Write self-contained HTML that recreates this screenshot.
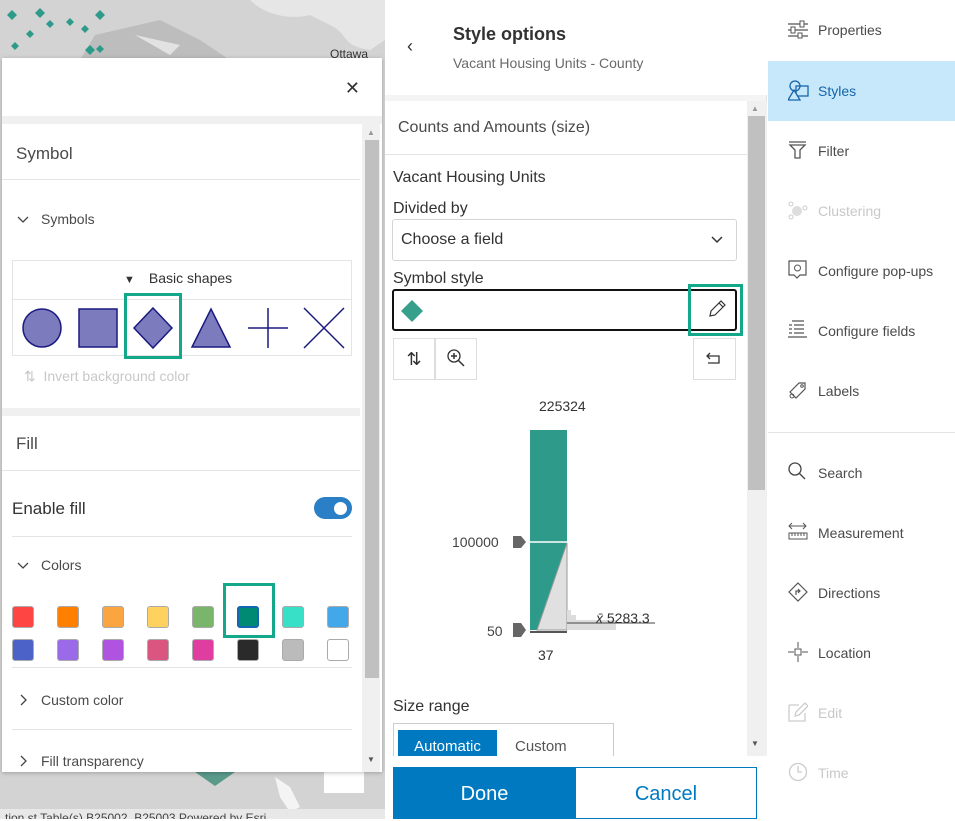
<!DOCTYPE html>
<html><head><style>
*{margin:0;padding:0;box-sizing:border-box}
body{width:955px;height:819px;position:relative;overflow:hidden;font-family:"Liberation Sans",sans-serif;color:#323232;background:#fff}
.a{position:absolute}
.t{font-size:15px}
.nav .it{position:absolute;left:0;width:187px;height:60px;font-size:14px;color:#4a4a4a}
.nav .it span{position:absolute;left:50px;top:22px}
.nav .it svg{position:absolute;left:20px;top:19px}
.sw{position:absolute;width:22px;height:22px;border-radius:3px;border:1px solid #aaa}
</style></head><body>
<!-- map -->
<div class="a" style="left:0;top:0;width:385px;height:819px;background:#d3d3d3"></div>
<svg class="a" style="left:0;top:0" width="385" height="60">
<path d="M250 0 C265 15 290 20 310 15 L330 25 C350 35 340 45 370 50 L385 40 L385 0Z" fill="#e6e6e6"/>
<path d="M95 35 L160 20 L200 40 L230 60 L80 60Z" fill="#bdbdbd"/>
<path d="M135 35 L180 45 L170 55 Z" fill="#e2e2e2"/>
<g fill="#2e9b8a"><path d="M12 10l5 5-5 5-5-5z"/><path d="M40 8l5 5-5 5-5-5z"/><path d="M70 18l4 4-4 4-4-4z"/><path d="M100 10l5 5-5 5-5-5z"/><path d="M50 20l4 4-4 4-4-4z"/><path d="M30 30l4 4-4 4-4-4z"/><path d="M90 45l5 5-5 5-5-5z"/><path d="M100 45l4 4-4 4-4-4z"/><path d="M85 25l4 4-4 4-4-4z"/><path d="M15 42l4 4-4 4-4-4z"/></g>
<text x="330" y="58" font-size="12" fill="#333">Ottawa</text>
</svg>
<svg class="a" style="left:0;top:772" width="385" height="47">
<path d="M195 0 L215 14 L235 0Z" fill="#5a9a8a"/>
<path d="M275 5 L290 15 L300 35 L290 40 L280 25Z" fill="#f4f4f4"/>
<rect x="324" y="0" width="40" height="21" fill="#fff"/>
<rect x="0" y="37" width="385" height="10" fill="#e8e8e8"/>
<text x="5" y="50" font-size="12" fill="#444">tion.st  Table(s) B25002, B25003    Powered by Esri</text>
</svg>
<!-- popup -->
<div class="a" style="left:2px;top:58px;width:380px;height:714px;background:#fff;box-shadow:0 1px 4px rgba(0,0,0,.25)">
<div class="a" style="right:22px;top:20px;font-size:18px;color:#333">✕</div>
<div class="a" style="left:0;top:58px;width:380px;height:8px;background:#f0f0f0"></div>
<div class="a" style="left:360px;top:66px;width:18px;height:648px;background:#f0f0f0"></div>
<div class="a" style="left:363px;top:82px;width:14px;height:538px;background:#c0c0c0"></div>
<div class="a" style="left:365px;top:70px;font-size:8px;color:#999">▲</div>
<div class="a" style="left:365px;top:697px;font-size:8px;color:#555">▼</div>
<div class="a t" style="left:14px;top:86px;font-size:17px;color:#4a4a4a">Symbol</div>
<div class="a" style="left:0;top:121px;width:358px;height:1px;background:#e4e4e4"></div>
<svg class="a" style="left:15px;top:158px" width="12" height="8"><path d="M1 1l5 5 5-5" fill="none" stroke="#444" stroke-width="1.3"/></svg>
<div class="a t" style="left:39px;top:153px;font-size:14px;color:#4a4a4a">Symbols</div>
<div class="a" style="left:10px;top:202px;width:340px;height:96px;border:1px solid #e4e4e4"></div>
<div class="a" style="left:10px;top:241px;width:340px;height:1px;background:#e4e4e4"></div>
<div class="a" style="left:122px;top:212px;font-size:14px;color:#323232"><span style="font-size:11px;margin-right:14px">▼</span>Basic shapes</div>
<svg class="a" style="left:10px;top:242px" width="340" height="56">
<g fill="#7b7bbd" stroke="#1a1a80" stroke-width="1.5">
<circle cx="30" cy="28" r="19"/><rect x="67" y="9" width="38" height="38"/><path d="M141 8l19 20-19 20-19-20z"/><path d="M199 9l19 38h-38z"/></g>
<g stroke="#1a1a80" stroke-width="1.5"><path d="M236 28h40M256 8v40M292 8l40 40M332 8l-40 40"/></g>
</svg>
<div class="a" style="left:122px;top:235px;width:58px;height:66px;border:3px solid #14a88a"></div>
<div class="a" style="left:22px;top:310px;font-size:14px;color:#c8c8c8">⇅&nbsp; Invert background color</div>
<div class="a" style="left:0;top:350px;width:358px;height:8px;background:#f0f0f0"></div>
<div class="a" style="left:14px;top:376px;font-size:17px;color:#4a4a4a">Fill</div>
<div class="a" style="left:0;top:412px;width:358px;height:1px;background:#e4e4e4"></div>
<div class="a" style="left:10px;top:441px;font-size:17px;color:#323232">Enable fill</div>
<div class="a" style="left:312px;top:439px;width:38px;height:22px;border-radius:11px;background:#2a7fc7"></div>
<div class="a" style="left:330px;top:442px;width:17px;height:17px;border-radius:50%;background:#fff;border:2px solid #2a7fc7"></div>
<div class="a" style="left:10px;top:478px;width:340px;height:1px;background:#e4e4e4"></div>
<svg class="a" style="left:15px;top:504px" width="12" height="8"><path d="M1 1l5 5 5-5" fill="none" stroke="#444" stroke-width="1.3"/></svg>
<div class="a" style="left:39px;top:499px;font-size:14px;color:#4a4a4a">Colors</div>
<div class="sw" style="left:10px;top:548px;background:#f44"></div>
<div class="sw" style="left:55px;top:548px;background:#ff7f00"></div>
<div class="sw" style="left:100px;top:548px;background:#faa540"></div>
<div class="sw" style="left:145px;top:548px;background:#ffd15e"></div>
<div class="sw" style="left:190px;top:548px;background:#79b56a"></div>
<div class="sw" style="left:235px;top:548px;background:#008a74;border:2px solid #1566b0"></div>
<div class="sw" style="left:280px;top:548px;background:#38e0c8"></div>
<div class="sw" style="left:325px;top:548px;background:#43a8ea"></div>
<div class="sw" style="left:10px;top:581px;background:#4c62c8"></div>
<div class="sw" style="left:55px;top:581px;background:#9b6ae8"></div>
<div class="sw" style="left:100px;top:581px;background:#b053e0"></div>
<div class="sw" style="left:145px;top:581px;background:#da5580"></div>
<div class="sw" style="left:190px;top:581px;background:#e03da0"></div>
<div class="sw" style="left:235px;top:581px;background:#2a2a2a"></div>
<div class="sw" style="left:280px;top:581px;background:#bbb"></div>
<div class="sw" style="left:325px;top:581px;background:#fff"></div>
<div class="a" style="left:221px;top:525px;width:52px;height:55px;border:3px solid #14a88a"></div>
<div class="a" style="left:10px;top:609px;width:340px;height:1px;background:#e4e4e4"></div>
<svg class="a" style="left:18px;top:636px" width="8" height="12"><path d="M1 1l5 5-5 5" fill="none" stroke="#444" stroke-width="1.3"/></svg>
<div class="a" style="left:39px;top:634px;font-size:14px;color:#4a4a4a">Custom color</div>
<div class="a" style="left:10px;top:671px;width:340px;height:1px;background:#e4e4e4"></div>
<svg class="a" style="left:18px;top:697px" width="8" height="12"><path d="M1 1l5 5-5 5" fill="none" stroke="#444" stroke-width="1.3"/></svg>
<div class="a" style="left:39px;top:695px;font-size:14px;color:#4a4a4a">Fill transparency</div>
</div>
<!-- middle panel -->
<div class="a" style="left:385px;top:0;width:382px;height:819px;background:#f4f4f4;border-right:1px solid #e0e0e0">
<div class="a" style="left:0;top:0;width:382px;height:95px;background:#fff"></div>
<div class="a" style="left:22px;top:36px;font-size:18px;color:#333">‹</div>
<div class="a" style="left:68px;top:24px;font-size:18px;font-weight:bold;color:#323232">Style options</div>
<div class="a" style="left:68px;top:55px;font-size:14px;color:#6a6a6a">Vacant Housing Units - County</div>
<div class="a" style="left:0;top:101px;width:362px;height:655px;background:#fff"></div>
<div class="a" style="left:362px;top:101px;width:20px;height:655px;background:#f0f0f0"></div>
<div class="a" style="left:363px;top:116px;width:17px;height:374px;background:#c0c0c0"></div>
<div class="a" style="left:366px;top:104px;font-size:8px;color:#999">▲</div>
<div class="a" style="left:366px;top:739px;font-size:8px;color:#555">▼</div>
<div class="a" style="left:13px;top:119px;font-size:16px;color:#4a4a4a">Counts and Amounts (size)</div>
<div class="a" style="left:0;top:154px;width:362px;height:1px;background:#e4e4e4"></div>
<div class="a" style="left:8px;top:169px;font-size:16px">Vacant Housing Units</div>
<div class="a" style="left:8px;top:200px;font-size:16px">Divided by</div>
<div class="a" style="left:7px;top:219px;width:345px;height:42px;border:1px solid #d4d4d4;border-radius:3px"></div>
<div class="a" style="left:16px;top:231px;font-size:16px">Choose a field</div>
<svg class="a" style="left:326px;top:236px" width="12" height="8"><path d="M1 1l5 5 5-5" fill="none" stroke="#333" stroke-width="1.5"/></svg>
<div class="a" style="left:8px;top:270px;font-size:16px">Symbol style</div>
<div class="a" style="left:7px;top:289px;width:345px;height:42px;border:2px solid #111;border-radius:3px"></div>
<svg class="a" style="left:16px;top:300px" width="22" height="22"><path d="M11 0l11 11-11 11-11-11z" fill="#37a08b"/></svg>
<svg class="a" style="left:322px;top:299px" width="20" height="20"><path d="M3 17l1-5L14 2l4 4L8 16z M12 4l4 4" fill="none" stroke="#333" stroke-width="1.2"/></svg>
<div class="a" style="left:303px;top:284px;width:55px;height:52px;border:3px solid #14a88a"></div>
<div class="a" style="left:8px;top:338px;width:42px;height:42px;border:1px solid #ddd;text-align:center;line-height:40px;font-size:18px">⇅</div>
<div class="a" style="left:50px;top:338px;width:42px;height:42px;border:1px solid #ddd"></div>
<svg class="a" style="left:61px;top:348px" width="22" height="22"><circle cx="8" cy="8" r="6" fill="none" stroke="#333" stroke-width="1.3"/><path d="M5 8h6M8 5v6M12 12l6 6" stroke="#333" stroke-width="1.5"/></svg>
<div class="a" style="left:308px;top:338px;width:43px;height:42px;border:1px solid #ddd"></div>
<svg class="a" style="left:320px;top:350px" width="20" height="16"><path d="M5 3l-3 3 3 3M2 6h12v7H3" fill="none" stroke="#333" stroke-width="1.3"/></svg>
<svg class="a" style="left:40px;top:395px" width="280" height="275">
<text x="114" y="16" font-size="14" fill="#333" font-family="Liberation Sans">225324</text>
<rect x="105" y="35" width="37" height="200" fill="#2e9b8a"/>
<path d="M142 148 L142 235 L112 235Z" fill="#e0e0e0" stroke="#999"/>
<line x1="105" y1="147" x2="142" y2="147" stroke="#fff" stroke-width="1.5"/>
<path d="M142 235v-20h4v5h5v5h40v10z" fill="#ddd"/>
<line x1="142" y1="228" x2="230" y2="228" stroke="#444"/>
<rect x="105" y="236" width="37" height="2" fill="#555"/>
<path d="M88 141h8l5 6-5 6h-8z" fill="#666"/><path d="M88 228h8l5 7-5 7h-8z" fill="#666"/>
<text x="27" y="152" font-size="14" fill="#444" font-family="Liberation Sans">100000</text>
<text x="62" y="241" font-size="14" fill="#444" font-family="Liberation Sans">50</text>
<text x="171" y="228" font-size="14" fill="#333" font-family="Liberation Sans"><tspan font-style="italic">x̄</tspan> 5283.3</text>
<text x="113" y="265" font-size="14" fill="#333" font-family="Liberation Sans">37</text>
</svg>
<div class="a" style="left:8px;top:698px;font-size:16px">Size range</div>
<div class="a" style="left:8px;top:723px;width:221px;height:40px;border:1px solid #ccc"></div>
<div class="a" style="left:13px;top:730px;width:99px;height:30px;background:#0079c1;color:#fff;font-size:15px;text-align:center;line-height:34px">Automatic</div>
<div class="a" style="left:130px;top:738px;font-size:15px;color:#555">Custom</div>
<div class="a" style="left:0;top:756px;width:382px;height:63px;background:#fff"></div>
<div class="a" style="left:8px;top:767px;width:183px;height:52px;background:#0079c1;color:#fff;font-size:20px;text-align:center;line-height:54px">Done</div>
<div class="a" style="left:190px;top:767px;width:182px;height:52px;border:1px solid #0079c1;color:#0079c1;font-size:20px;text-align:center;line-height:52px;background:#fff">Cancel</div>
</div>
<!-- right nav -->
<div class="a nav" style="left:768px;top:0;width:187px;height:819px;background:#fff">
<div class="it" style="top:0"><svg width="20" height="20"><path d="M0 5h20M0 11h20M0 17h20" stroke="#555" stroke-width="1.2"/><rect x="12" y="2" width="4" height="6" fill="#fff" stroke="#555"/><rect x="3" y="8" width="4" height="6" fill="#fff" stroke="#555"/><rect x="10" y="14" width="4" height="5" fill="#fff" stroke="#555"/></svg><span>Properties</span></div>
<div class="it" style="top:61px;background:#c7e8fb;color:#1565a8"><svg width="22" height="22"><circle cx="7" cy="6" r="5" fill="none" stroke="#1565a8" stroke-width="1.3"/><rect x="8" y="6" width="12" height="10" fill="none" stroke="#1565a8" stroke-width="1.3"/><path d="M6 10l6 10H0z" fill="#c7e8fb" stroke="#1565a8" stroke-width="1.3"/></svg><span>Styles</span></div>
<div class="it" style="top:121px"><svg width="20" height="20"><path d="M1 2h17M2 5h15l-5 5v8h-5v-8z" fill="none" stroke="#555" stroke-width="1.3"/></svg><span>Filter</span></div>
<div class="it" style="top:181px;color:#c8c8c8"><svg width="20" height="20"><circle cx="9" cy="11" r="5" fill="#ddd"/><circle cx="3" cy="4" r="2" fill="none" stroke="#ccc"/><circle cx="17" cy="8" r="2" fill="none" stroke="#ccc"/><circle cx="3" cy="17" r="2" fill="none" stroke="#ccc"/></svg><span>Clustering</span></div>
<div class="it" style="top:241px"><svg width="20" height="20"><path d="M1 1h17v14h-6l-3 3-3-3H1z" fill="none" stroke="#555" stroke-width="1.2"/><circle cx="9.5" cy="8" r="3" fill="none" stroke="#555"/></svg><span>Configure pop-ups</span></div>
<div class="it" style="top:301px"><svg width="20" height="20"><path d="M4 1h12M6 5h10M1 5h3M6 9h10M1 9h3M6 13h10M1 13h3M0 17h19" stroke="#555" stroke-width="1.2"/></svg><span>Configure fields</span></div>
<div class="it" style="top:361px"><svg width="20" height="20"><path d="M2 12L11 3h6v6l-9 9z" fill="none" stroke="#555" stroke-width="1.2"/><circle cx="14" cy="6" r="1.3" fill="none" stroke="#555"/><circle cx="4" cy="16" r="2" fill="none" stroke="#555"/></svg><span>Labels</span></div>
<div class="a" style="left:0;top:432px;width:187px;height:1px;background:#e4e4e4"></div>
<div class="it" style="top:443px"><svg width="20" height="20"><circle cx="7" cy="7" r="6" fill="none" stroke="#444" stroke-width="1.3"/><path d="M11 11l6 6" stroke="#444" stroke-width="1.3"/></svg><span>Search</span></div>
<div class="it" style="top:503px"><svg width="20" height="20"><path d="M1 4h17M4 1L1 4l3 3M15 1l3 3-3 3M1 11h18v6H1zM4 11v3M7 11v3M10 11v3M13 11v3M16 11v3" fill="none" stroke="#555"/></svg><span>Measurement</span></div>
<div class="it" style="top:563px"><svg width="20" height="20"><path d="M10 1l9 9-9 9-9-9z" fill="none" stroke="#555" stroke-width="1.2"/><path d="M8 13v-4h4M10 7l2 2-2 2" fill="none" stroke="#555" stroke-width="1.2"/></svg><span>Directions</span></div>
<div class="it" style="top:623px"><svg width="20" height="20"><path d="M10 0v6M10 14v6M0 10h6M14 10h6" stroke="#555"/><rect x="7" y="7" width="6" height="6" fill="none" stroke="#555"/></svg><span>Location</span></div>
<div class="it" style="top:683px;color:#c8c8c8"><svg width="20" height="20"><path d="M1 3h10M1 3v16h16v-8M7 14l1-4 9-9 3 3-9 9z" fill="none" stroke="#ccc" stroke-width="1.3"/></svg><span>Edit</span></div>
<div class="it" style="top:743px;color:#c8c8c8"><svg width="20" height="20"><circle cx="10" cy="10" r="8.5" fill="none" stroke="#ccc" stroke-width="1.3"/><path d="M10 4v6h4" fill="none" stroke="#ccc" stroke-width="1.3"/></svg><span>Time</span></div>
</div>
</body></html>
